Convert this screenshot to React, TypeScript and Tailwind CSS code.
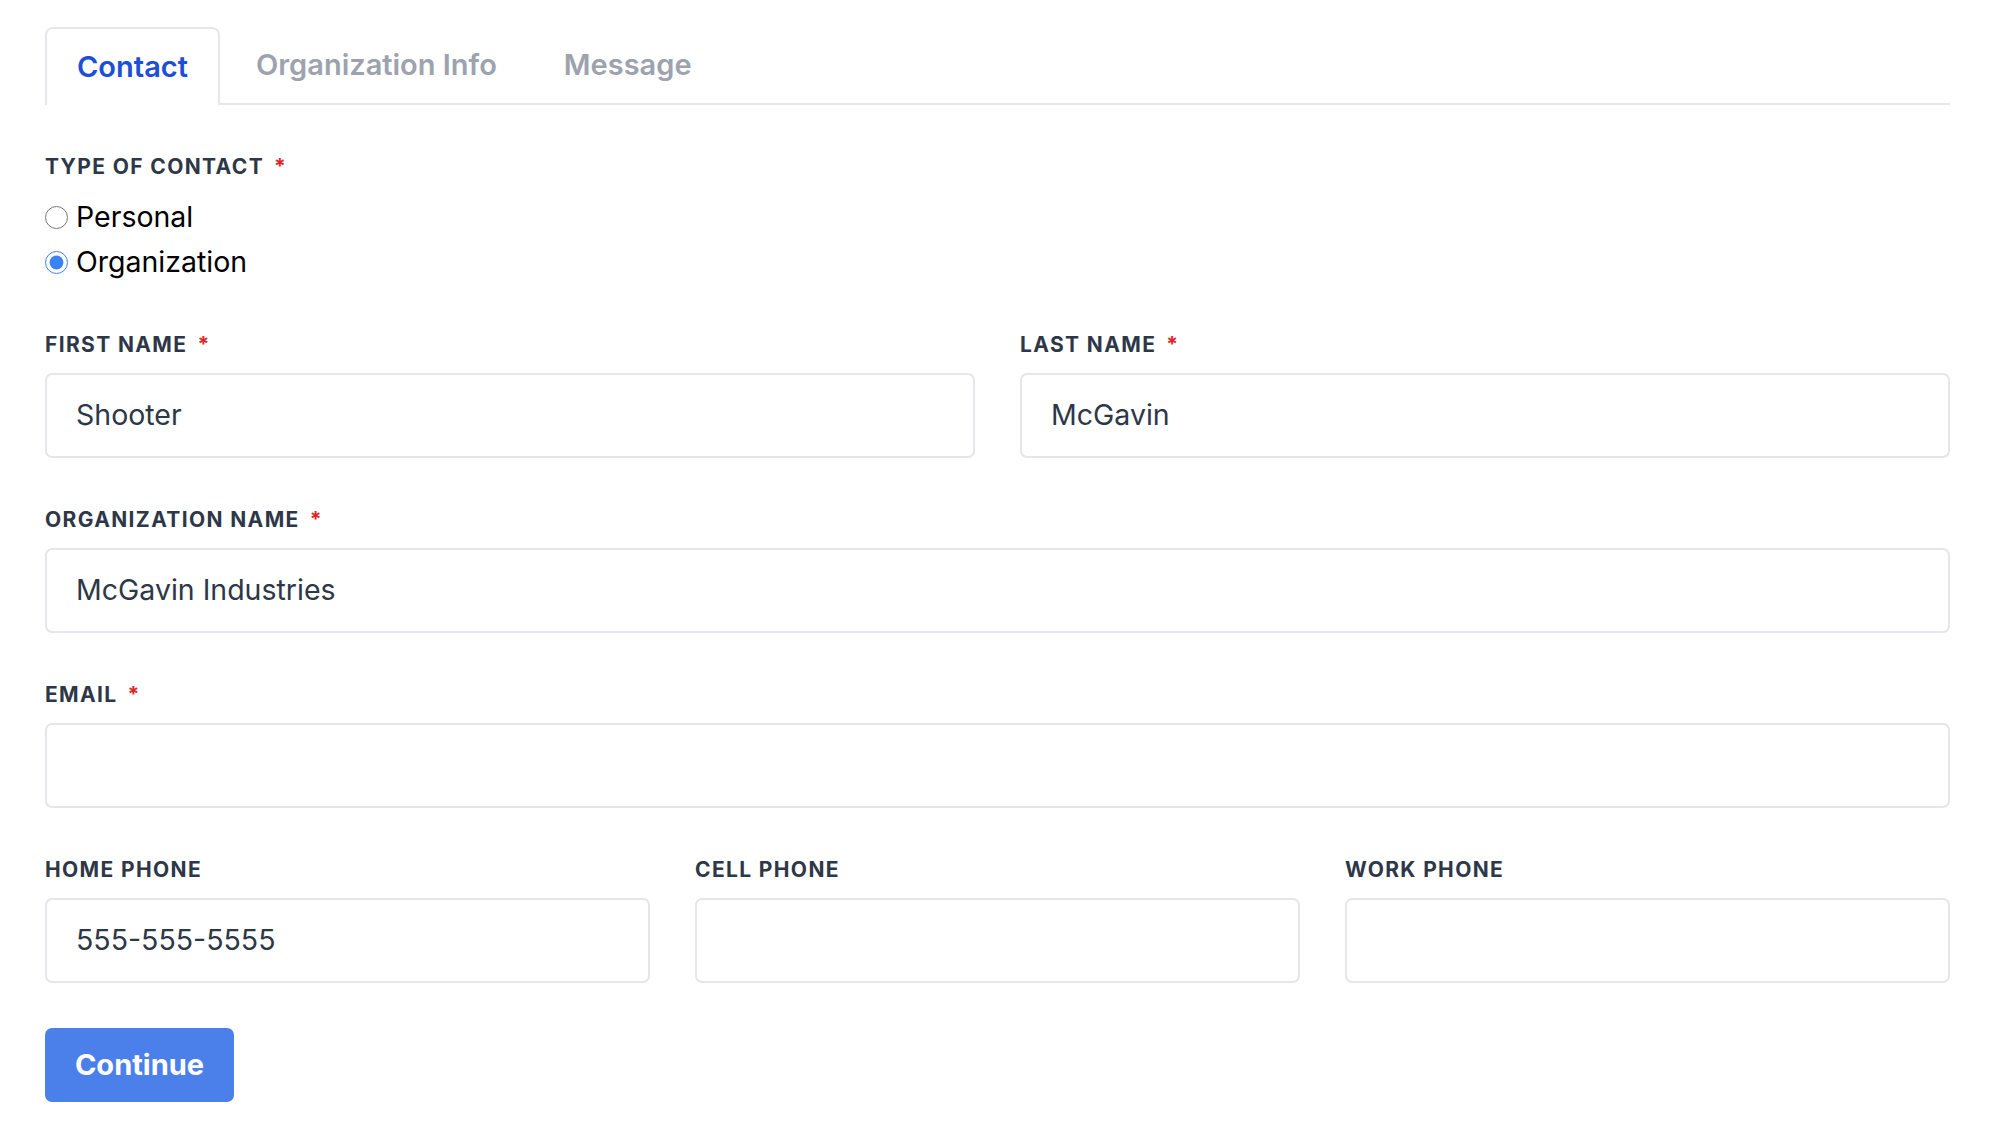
import React from "react";

const font = { fontFamily: "Inter, 'Noto Sans', sans-serif" };

function Label({ text, required }: { text: string; required?: boolean }) {
  return (
    <div className="flex items-center h-[26px] text-[21px] font-bold tracking-[0.065em] uppercase text-[#2d3748] leading-none">
      <span>{text}</span>
      {required && <span className="ml-[10px] text-[#dc2626]">*</span>}
    </div>
  );
}

function Field({ label, required, value }: { label: string; required?: boolean; value?: string }) {
  return (
    <div className="flex flex-col gap-[16px]">
      <Label text={label} required={required} />
      <div className="h-[85px] border-2 border-[#e4e6eb] rounded-[7px] bg-white flex items-center px-[29px] text-[28.5px] text-[#2d3748]">
        {value}
      </div>
    </div>
  );
}

export default function App() {
  return (
    <div className="min-h-screen bg-white pl-[45px] pr-[50px] pt-[27px]" style={font}>
      <div className="flex items-end gap-[4px] border-b-2 border-[#e5e7eb]">
        <div className="h-[78px] -mb-[2px] px-[30px] flex items-center border-2 border-b-0 border-[#e5e7eb] rounded-t-[8px] bg-white text-[29px] font-semibold text-[#1d4ed8]">
          Contact
        </div>
        <div className="h-[76px] px-[32px] flex items-center text-[29px] font-semibold text-[#9ca3af]">
          Organization Info
        </div>
        <div className="h-[76px] pl-[31px] pr-[32px] flex items-center text-[29px] font-semibold text-[#9ca3af]">
          Message
        </div>
      </div>

      <div className="pt-[48px] flex flex-col">
        <Label text="Type of Contact" required />
        <div className="mt-[21px] flex flex-col gap-[11px]">
          <label className="flex items-center gap-[8px] text-[28.5px] text-black h-[34px]">
            <input type="radio" name="type" className="w-[23px] h-[23px] m-0 accent-[#3b82f6]" />
            Personal
          </label>
          <label className="flex items-center gap-[8px] text-[28.5px] text-black h-[34px]">
            <input type="radio" name="type" defaultChecked className="w-[23px] h-[23px] m-0 accent-[#3b82f6]" />
            Organization
          </label>
        </div>

        <div className="mt-[52px] grid grid-cols-2 gap-x-[45px]">
          <Field label="First Name" required value="Shooter" />
          <Field label="Last Name" required value="McGavin" />
        </div>

        <div className="mt-[48px]">
          <Field label="Organization Name" required value="McGavin Industries" />
        </div>

        <div className="mt-[48px]">
          <Field label="Email" required />
        </div>

        <div className="mt-[48px] grid grid-cols-3 gap-x-[45px]">
          <Field label="Home Phone" value="555-555-5555" />
          <Field label="Cell Phone" />
          <Field label="Work Phone" />
        </div>

        <div className="mt-[45px]">
          <button className="h-[74px] w-[189px] rounded-[7px] bg-[#4b80eb] text-white text-[29px] font-bold">
            Continue
          </button>
        </div>
      </div>
    </div>
  );
}
